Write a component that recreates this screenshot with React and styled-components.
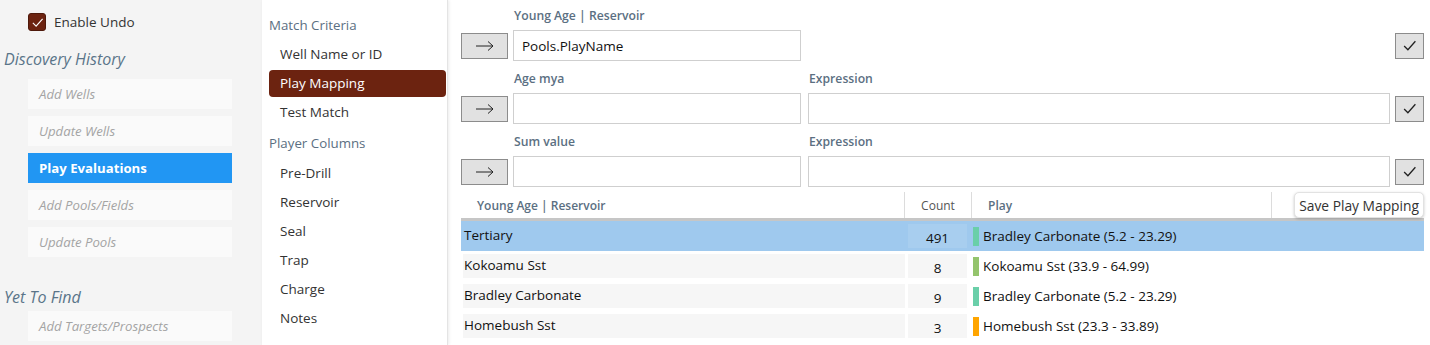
import styled, { createGlobalStyle } from "styled-components";

const GlobalStyle = createGlobalStyle`
  body {
    margin: 0;
    background: #ffffff;
    font-family: "Open Sans", "Noto Sans", sans-serif;
    color: #222;
  }
  * { box-sizing: border-box; }
`;

const history = ["Add Wells", "Update Wells", "Play Evaluations", "Add Pools/Fields", "Update Pools"];
const playerColumns = ["Pre-Drill", "Reservoir", "Seal", "Trap", "Charge", "Notes"];

const rows = [
  { name: "Tertiary", count: 491, play: "Bradley Carbonate (5.2 - 23.29)", color: "#6acfa9", selected: true },
  { name: "Kokoamu Sst", count: 8, play: "Kokoamu Sst (33.9 - 64.99)", color: "#94c46c" },
  { name: "Bradley Carbonate", count: 9, play: "Bradley Carbonate (5.2 - 23.29)", color: "#6acfa9" },
  { name: "Homebush Sst", count: 3, play: "Homebush Sst (23.3 - 33.89)", color: "#ffa500" },
];

const ArrowIcon = () => (
  <svg width="20" height="12" viewBox="0 0 20 12">
    <path d="M1 6H18M13 1.5L18 6L13 10.5" fill="none" stroke="#222" strokeWidth="1" />
  </svg>
);

const CheckIcon = ({ color = "#222", size = 14 }) => (
  <svg width={size} height={size} viewBox="0 0 14 14">
    <path d="M2 7.5L5.5 11L12.5 3" fill="none" stroke={color} strokeWidth="1.2" />
  </svg>
);

const Field = ({ label, value, expression, showExpression }) => (
  <FormRow>
    <Label $col={2}>{label}</Label>
    {showExpression && <Label $col={3} $shift>Expression</Label>}
    <IconButton $col={1}><ArrowIcon /></IconButton>
    <Input $col={2} defaultValue={value} />
    {showExpression && <Input $col={3} $shift defaultValue={expression} />}
    <IconButton $col={4}><CheckIcon size={15} /></IconButton>
  </FormRow>
);

export default function App() {
  return (
    <>
      <GlobalStyle />
      <Page>
        <Sidebar>
          <UndoRow>
            <Checkbox><CheckIcon color="#fff" size={13} /></Checkbox>
            Enable Undo
          </UndoRow>
          <SectionTitle>Discovery History</SectionTitle>
          {history.map((h) => (
            <HistoryItem key={h} $active={h === "Play Evaluations"}>{h}</HistoryItem>
          ))}
          <SectionTitle $spaced>Yet To Find</SectionTitle>
          <HistoryItem>Add Targets/Prospects</HistoryItem>
        </Sidebar>

        <MidNav>
          <NavHeader>Match Criteria</NavHeader>
          <NavItem>Well Name or ID</NavItem>
          <NavItem $active>Play Mapping</NavItem>
          <NavItem>Test Match</NavItem>
          <NavHeader $spaced>Player Columns</NavHeader>
          {playerColumns.map((p) => (
            <NavItem key={p}>{p}</NavItem>
          ))}
        </MidNav>

        <Main>
          <Field label="Young Age | Reservoir" value="Pools.PlayName" />
          <Field label="Age mya" value="" showExpression />
          <Field label="Sum value" value="" showExpression />

          <Table>
            <HeaderRow>
              <HeadCell>Young Age | Reservoir</HeadCell>
              <HeadCell $center $plain>Count</HeadCell>
              <HeadCell>Play</HeadCell>
              <HeadAction>
                <SaveButton>Save Play Mapping</SaveButton>
              </HeadAction>
            </HeaderRow>
            {rows.map((r) => (
              <DataRow key={r.name} $selected={r.selected}>
                <NameCell $selected={r.selected}>{r.name}</NameCell>
                <CountCell $selected={r.selected}>{r.count}</CountCell>
                <PlayCell>
                  <ColorBar style={{ background: r.color }} />
                  {r.play}
                </PlayCell>
              </DataRow>
            ))}
          </Table>
        </Main>
      </Page>
    </>
  );
}

const Page = styled.div`
  display: flex;
  width: 1430px;
  height: 345px;
  overflow: hidden;
`;

const Sidebar = styled.div`
  width: 262px;
  flex-shrink: 0;
  background: #f4f4f4;
  padding-top: 13px;
`;

const UndoRow = styled.div`
  display: flex;
  align-items: center;
  gap: 8px;
  margin-left: 28px;
  height: 18px;
  font-size: 13.5px;
  color: #333;
`;

const Checkbox = styled.span`
  width: 18px;
  height: 18px;
  border-radius: 3px;
  background: #6c2310;
  border: 1px solid #4e190b;
  display: flex;
  align-items: center;
  justify-content: center;
`;

const SectionTitle = styled.div`
  margin: ${(p) => (p.$spaced ? "29px" : "17px")} 0 ${(p) => (p.$spaced ? "3px" : "9px")} 4px;
  height: 22px;
  line-height: 22px;
  font-size: 16px;
  font-style: italic;
  color: #5a7489;
`;

const HistoryItem = styled.div`
  margin: 0 0 7px 28px;
  width: 204px;
  height: 30px;
  line-height: 30px;
  padding-left: 11px;
  font-size: 13.2px;
  font-style: ${(p) => (p.$active ? "normal" : "italic")};
  font-weight: ${(p) => (p.$active ? 700 : 400)};
  color: ${(p) => (p.$active ? "#fff" : "#a4a4a4")};
  background: ${(p) => (p.$active ? "#2196f3" : "#fafafa")};
`;

const MidNav = styled.div`
  width: 186px;
  flex-shrink: 0;
  display: flex;
  flex-direction: column;
  gap: 2px;
  padding: 12px 0 0 7px;
  border-right: 1px solid #e4e4e4;
  box-shadow: 1px 0 3px rgba(0, 0, 0, 0.08);
`;

const NavHeader = styled.div`
  height: 27px;
  line-height: 27px;
  margin: ${(p) => (p.$spaced ? "2px 0 1px" : "0")};
  font-size: 13.3px;
  color: #5b6f82;
`;

const NavItem = styled.div`
  width: 177px;
  height: 27px;
  line-height: 27px;
  padding-left: 11px;
  border-radius: 4px;
  font-size: 13.5px;
  color: ${(p) => (p.$active ? "#fff" : "#333")};
  background: ${(p) => (p.$active ? "#6c2310" : "transparent")};
`;

const Main = styled.div`
  flex: 1;
  padding: 6px 6px 0 13px;
  display: flex;
  flex-direction: column;
`;

const FormRow = styled.div`
  display: grid;
  grid-template-columns: 47px 288px 1fr 29px;
  grid-template-rows: 18px 31px;
  column-gap: 5px;
  row-gap: 6px;
  margin-bottom: 8px;
  align-items: center;
`;

const Label = styled.div`
  grid-column: ${(p) => p.$col};
  grid-row: 1;
  margin-left: ${(p) => (p.$shift ? "3px" : "1px")};
  font-size: 12.2px;
  font-weight: 600;
  color: #5b6f82;
`;

const IconButton = styled.button`
  grid-column: ${(p) => p.$col};
  grid-row: 2;
  height: 26px;
  padding: 0;
  display: flex;
  align-items: center;
  justify-content: center;
  background: #e1e1e1;
  border: 1px solid #8c8c8c;
`;

const Input = styled.input`
  grid-column: ${(p) => p.$col};
  grid-row: 2;
  height: 31px;
  margin-left: ${(p) => (p.$shift ? "2px" : "0")};
  border: 1px solid #cfcfcf;
  padding: 0 8px;
  font-family: inherit;
  font-size: 13.5px;
  color: #111;
  outline: none;
`;

const Table = styled.div`
  margin-top: -3px;
  display: flex;
  flex-direction: column;
`;

const HeaderRow = styled.div`
  display: grid;
  grid-template-columns: 444px 67px 300px 1fr;
  height: 29px;
  border-bottom: 3px solid #c6c6c6;
`;

const HeadCell = styled.div`
  display: flex;
  align-items: center;
  justify-content: ${(p) => (p.$center ? "center" : "flex-start")};
  padding-left: ${(p) => (p.$center ? "0" : "16px")};
  border-right: 1px solid #dcdcdc;
  font-size: 12px;
  font-weight: ${(p) => (p.$plain ? 400 : 600)};
  color: ${(p) => (p.$plain ? "#555" : "#5b6f82")};
`;

const HeadAction = styled.div`
  display: flex;
  justify-content: flex-end;
`;

const SaveButton = styled.button`
  height: 26px;
  padding: 0 4px;
  background: #fff;
  border: 1px solid #e2e2e2;
  border-radius: 5px;
  box-shadow: 0 1px 3px rgba(0, 0, 0, 0.22);
  font-family: inherit;
  font-size: 13.8px;
  color: #333;
`;

const DataRow = styled.div`
  display: grid;
  grid-template-columns: 444px 67px 1fr;
  height: 30px;
  padding: 3px 0;
  background: ${(p) => (p.$selected ? "#9fc9ee" : "transparent")};
`;

const NameCell = styled.div`
  margin-left: 2px;
  padding-left: 1px;
  line-height: 22px;
  font-size: 13.5px;
  color: #111;
  background: ${(p) => (p.$selected ? "transparent" : "#f6f6f6")};
`;

const CountCell = styled.div`
  margin: 0 5px 0 3px;
  display: flex;
  align-items: flex-end;
  justify-content: center;
  padding-bottom: 1px;
  font-size: 13.5px;
  color: #111;
  background: ${(p) => (p.$selected ? "rgba(255,255,255,0.1)" : "#f6f6f6")};
`;

const PlayCell = styled.div`
  display: flex;
  align-items: center;
  gap: 4px;
  padding-left: 1px;
  font-size: 13.5px;
  color: #111;
`;

const ColorBar = styled.span`
  width: 6px;
  height: 19px;
  flex-shrink: 0;
`;
